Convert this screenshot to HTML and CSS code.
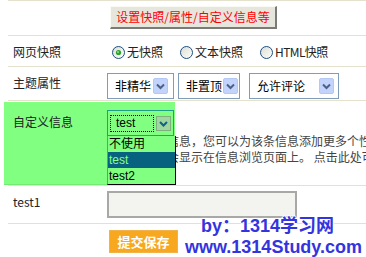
FILE: index.html
```html
<!DOCTYPE html>
<html lang="zh-CN">
<head>
<meta charset="utf-8">
<title>自定义信息</title>
<link rel="stylesheet" href="styles.css">
</head>
<body>
<div class="page">
  <div class="row row-top">
    <div class="col-label"></div>
    <div class="col-field">
      <button class="btn-settings" type="button">设置快照/属性/自定义信息等</button>
    </div>
  </div>

  <div class="row row-snap">
    <div class="col-label">网页快照</div>
    <div class="col-field radios">
      <label class="radio">
        <svg width="13" height="13" viewBox="0 0 13 13"><defs><linearGradient id="rg1" x1="0" y1="0" x2="1" y2="1"><stop offset="0" stop-color="#dcdcd4"/><stop offset="1" stop-color="#ffffff"/></linearGradient></defs><circle cx="6.5" cy="6.5" r="6" fill="url(#rg1)" stroke="#1c5180"/><circle cx="6.5" cy="6.5" r="2.6" fill="#2aa52a"/><circle cx="6" cy="6" r="1" fill="#8fe08f"/></svg>
        <span>无快照</span>
      </label>
      <label class="radio">
        <svg width="13" height="13" viewBox="0 0 13 13"><defs><linearGradient id="rg2" x1="0" y1="0" x2="1" y2="1"><stop offset="0" stop-color="#dcdcd4"/><stop offset="1" stop-color="#ffffff"/></linearGradient></defs><circle cx="6.5" cy="6.5" r="6" fill="url(#rg2)" stroke="#1c5180"/></svg>
        <span>文本快照</span>
      </label>
      <label class="radio">
        <svg width="13" height="13" viewBox="0 0 13 13"><defs><linearGradient id="rg3" x1="0" y1="0" x2="1" y2="1"><stop offset="0" stop-color="#dcdcd4"/><stop offset="1" stop-color="#ffffff"/></linearGradient></defs><circle cx="6.5" cy="6.5" r="6" fill="url(#rg3)" stroke="#1c5180"/></svg>
        <span class="html-label">HTML快照</span>
      </label>
    </div>
  </div>

  <div class="row row-attr">
    <div class="col-label">主题属性</div>
    <div class="col-field selects">
      <div class="select sel-a">
        <span class="sel-text">非精华</span>
        <svg class="sel-arrow" width="15" height="16" viewBox="0 0 15 16"><rect x="0.5" y="0.5" width="14" height="15" rx="1.5" fill="#c3d4fc" stroke="#b4c8f4"/><path d="M4 6.5 L7.5 10 L11 6.5" fill="none" stroke="#4d6185" stroke-width="2"/></svg>
      </div>
      <div class="select sel-b">
        <span class="sel-text">非置顶</span>
        <svg class="sel-arrow" width="15" height="16" viewBox="0 0 15 16"><rect x="0.5" y="0.5" width="14" height="15" rx="1.5" fill="#c3d4fc" stroke="#b4c8f4"/><path d="M4 6.5 L7.5 10 L11 6.5" fill="none" stroke="#4d6185" stroke-width="2"/></svg>
      </div>
      <div class="select sel-c">
        <span class="sel-text">允许评论</span>
        <svg class="sel-arrow" width="15" height="16" viewBox="0 0 15 16"><rect x="0.5" y="0.5" width="14" height="15" rx="1.5" fill="#c3d4fc" stroke="#b4c8f4"/><path d="M4 6.5 L7.5 10 L11 6.5" fill="none" stroke="#4d6185" stroke-width="2"/></svg>
      </div>
    </div>
  </div>

  <div class="row row-custom">
    <div class="highlight"></div>
    <div class="col-label label-custom">自定义信息</div>
    <div class="col-field">
      <div class="gselect">
        <span class="gfocus">test</span>
        <svg class="garrow" width="15" height="15" viewBox="0 0 15 15"><rect x="0.5" y="0.5" width="14" height="14" fill="#9ed89e" stroke="#7fb07f"/><path d="M4 6 L7.5 9.5 L11 6" fill="none" stroke="#145f86" stroke-width="2"/></svg>
        <ul class="glist">
          <li>不使用</li>
          <li class="on">test</li>
          <li>test2</li>
        </ul>
      </div>
      <div class="help">
        <p class="help-line">通过自定义信息，您可以为该条信息添加更多个性化的</p>
        <p class="help-line">以下的内容会显示在信息浏览页面上。 点击此处可以添加</p>
      </div>
    </div>
  </div>

  <div class="row row-test1">
    <div class="col-label">test1</div>
    <div class="col-field">
      <div class="textbox"></div>
    </div>
  </div>

  <div class="row row-submit">
    <div class="col-label"></div>
    <div class="col-field">
      <button class="btn-submit" type="button">提交保存</button>
    </div>
  </div>

  <div class="watermark">
    <div class="wm-line wm-by">by：1314学习网</div>
    <div class="wm-line">www.1314Study.com</div>
  </div>
</div>
</body>
</html>
```

FILE: styles.css
```css
html, body {
  margin: 0;
  padding: 0;
  background: #ffffff;
}
body {
  width: 366px;
  height: 257px;
  overflow: hidden;
  font-family: "Noto Sans CJK SC", "Liberation Sans", sans-serif;
  font-size: 12px;
  color: #222;
}
.page {
  position: relative;
  padding-left: 8px;
  width: 358px;
  height: 257px;
}
.row {
  display: flex;
  align-items: flex-start;
  border-top: 1px solid #e4e1cc;
  position: relative;
}
.col-label {
  width: 94px;
  padding-left: 5px;
  padding-top: 8px;
  line-height: 16px;
  flex: none;
  color: #222;
}
.col-field {
  flex: 1;
  min-width: 0;
}

/* top row */
.row-top { height: 34px; }
.btn-settings {
  margin: 5px 0 0 3px;
  width: 167px;
  height: 23px;
  padding: 0;
  background: #e6e6dc;
  border-style: solid;
  border-width: 1px 2px 2px 1px;
  border-color: #fbfbf6 #7b7b76 #7b7b76 #fbfbf6;
  color: #ff0000;
  font-family: "Noto Sans CJK SC", sans-serif;
  font-size: 12px;
  line-height: 18px;
}

/* snapshot radios */
.row-snap { height: 30px; }
.radios {
  display: flex;
  align-items: center;
  padding-left: 5px;
  padding-top: 8px;
  line-height: 16px;
}
.radio {
  display: flex;
  align-items: center;
  gap: 2px;
  margin-right: 17px;
}
.radio svg { display: block; }
.html-label { letter-spacing: -0.6px; }

/* selects */
.row-attr { height: 33px; }
.selects {
  display: flex;
  padding-top: 6px;
}
.select {
  box-sizing: border-box;
  height: 26px;
  border: 1px solid #7f9db9;
  background: #fff;
  display: flex;
  align-items: center;
  padding-left: 7px;
  padding-right: 3px;
  color: #000;
  white-space: nowrap;
}
.sel-text { flex: 1; min-width: 0; line-height: 16px; }
.sel-arrow { display: block; flex: none; }
.sel-a { width: 67px; margin-right: 4px; padding-right: 5px; }
.sel-b { width: 62px; margin-right: 9px; padding-left: 7px; padding-right: 1px; }
.sel-c { width: 90px; padding-right: 4px; }

/* custom info row */
.row-custom { height: 84px; }
.highlight {
  position: absolute;
  left: -4px;
  top: 1px;
  width: 171px;
  height: 83px;
  background: #80ff80;
  border-bottom: 1px solid #74ea74;
  box-sizing: border-box;
  z-index: 1;
}
.label-custom {
  position: relative;
  z-index: 2;
  padding-top: 13px;
}
.gselect {
  position: relative;
  z-index: 2;
  margin-top: 9px;
  width: 67px;
  height: 26px;
  box-sizing: border-box;
  border: 1px solid #1f9e8c;
  display: flex;
  align-items: center;
  padding-left: 2px;
  gap: 2px;
}
.gfocus {
  box-sizing: border-box;
  width: 44px;
  height: 17px;
  border: 1px dotted #000;
  padding-left: 5px;
  font-family: "Liberation Sans", sans-serif;
  font-size: 12px;
  line-height: 15px;
  color: #000;
}
.garrow { display: block; }
.glist {
  position: absolute;
  left: -1px;
  top: 25px;
  width: 69px;
  margin: 0;
  padding: 0;
  list-style: none;
  background: #80ff80;
  border-left: 1px solid #6e9a6e;
  border-right: 1px solid #000;
  border-bottom: 1px solid #000;
  box-sizing: border-box;
  z-index: 3;
}
.glist li {
  height: 16px;
  line-height: 16px;
  padding-left: 1px;
  font-family: "Liberation Sans", "Noto Sans CJK SC", sans-serif;
  font-size: 12px;
  color: #000;
}
.glist li.on {
  background: #06627e;
  color: #88ff88;
}
.help {
  margin-top: -3px;
  overflow: hidden;
  color: #444;
}
.help-line {
  margin: 0;
  white-space: nowrap;
  line-height: 16px;
}

/* test1 row */
.row-test1 { height: 37px; }
.textbox {
  margin-top: 5px;
  width: 190px;
  height: 27px;
  box-sizing: border-box;
  border: 2px solid #a8a8a6;
  background: #f3f3f0;
}

/* submit row */
.row-submit { height: 33px; }
.btn-submit {
  margin: 6px 0 0 2px;
  width: 69px;
  height: 23px;
  padding: 0;
  background: #f7a81e;
  border: 1px solid #f2b24a;
  color: #ffffff;
  font-family: "Noto Sans CJK SC", sans-serif;
  font-weight: bold;
  font-size: 13px;
  line-height: 20px;
}

/* watermark */
.watermark {
  position: absolute;
  left: 185px;
  top: 216px;
  z-index: 5;
  font-family: "Liberation Sans", "Noto Sans CJK SC", sans-serif;
  font-weight: bold;
  font-size: 18px;
  line-height: 21px;
  color: #3434de;
  white-space: nowrap;
  text-shadow: 1px 0 0 #fff, -1px 0 0 #fff, 0 1px 0 #fff, 0 -1px 0 #fff, 0 0 3px #fff;
}
.wm-by { padding-left: 16px; }
```
